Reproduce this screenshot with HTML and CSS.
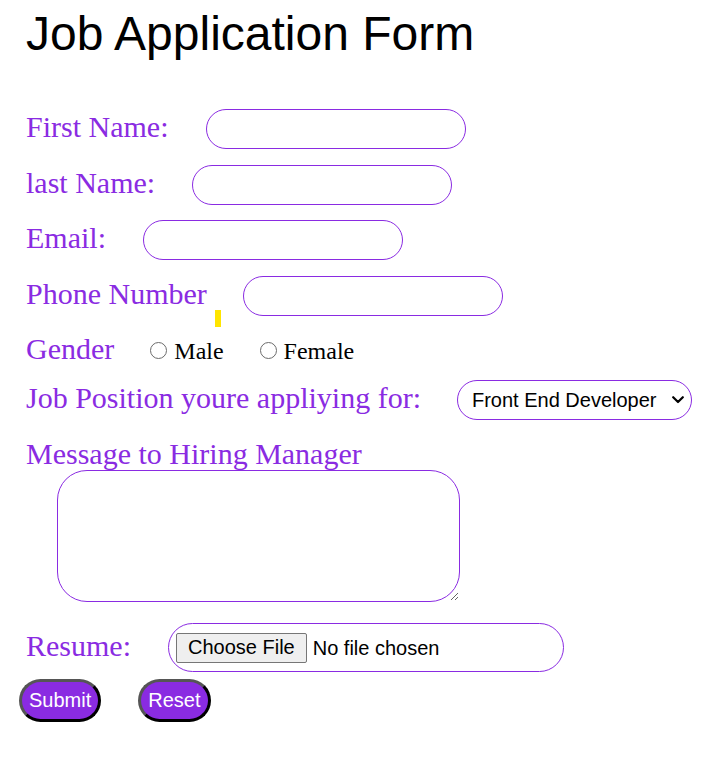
FILE: index.html
```html
<!DOCTYPE html>
<html lang="en">
<head>
<meta charset="utf-8">
<title>Job Application Form</title>
<link rel="stylesheet" href="styles.css">
</head>
<body>
<h1 class="title">Job Application Form</h1>
<form class="form">
  <div class="row">
    <label class="label" for="fn">First Name:</label>
    <input class="text-input" id="fn" type="text">
  </div>
  <div class="row">
    <label class="label" for="ln">last Name:</label>
    <input class="text-input" id="ln" type="text">
  </div>
  <div class="row">
    <label class="label" for="em">Email:</label>
    <input class="text-input" id="em" type="email">
  </div>
  <div class="row row-phone">
    <label class="label" for="ph">Phone Number</label>
    <span class="marker"></span>
    <input class="text-input phone-input" id="ph" type="tel">
  </div>
  <div class="row row-gender">
    <span class="label">Gender</span>
    <label class="choice"><input class="radio" type="radio" name="g">Male</label>
    <label class="choice"><input class="radio" type="radio" name="g">Female</label>
  </div>
  <div class="row row-job">
    <label class="label" for="job">Job Position youre appliying for:</label>
    <span class="select-wrap">
      <select class="select" id="job">
        <option>Front End Developer</option>
        <option>Back End Developer</option>
      </select>
      <svg class="chevron" width="12" height="8" viewBox="0 0 12 8" aria-hidden="true">
        <path d="M1.2 1.2 L6 6 L10.8 1.2" fill="none" stroke="#000" stroke-width="2.2" stroke-linecap="round" stroke-linejoin="round"/>
      </svg>
    </span>
  </div>
  <div class="message">
    <label class="label" for="msg">Message to Hiring Manager</label>
    <textarea class="textarea" id="msg"></textarea>
  </div>
  <div class="row row-resume">
    <label class="label" for="cv">Resume:</label>
    <input class="file-input" id="cv" type="file">
  </div>
  <div class="actions">
    <button class="btn" type="submit">Submit</button>
    <button class="btn" type="reset">Reset</button>
  </div>
</form>
</body>
</html>
```
FILE: styles.css
```css
body {
  margin: 0;
  padding: 6px 0 0 26px;
  background: #fff;
  font-family: "Liberation Serif", "Times New Roman", serif;
}

.title {
  margin: 0;
  font-family: "Liberation Sans", Arial, sans-serif;
  font-weight: normal;
  font-size: 48px;
  line-height: 55px;
  color: #000;
}

.form {
  display: flex;
  flex-direction: column;
  align-items: flex-start;
  margin-top: 48px;
}

.row {
  display: flex;
  align-items: center;
  gap: 37px;
  margin-bottom: 15.5px;
}

.label {
  font-size: 30px;
  line-height: 34px;
  color: #8a2be2;
}

.row .label {
  margin-bottom: 4px;
}

.row-gender .label {
  margin-bottom: 0;
}

.text-input {
  box-sizing: border-box;
  width: 260px;
  height: 40px;
  margin: 0;
  border: 1px solid #8a2be2;
  border-radius: 20px;
  background: #fff;
  outline: none;
}

.row-phone {
  gap: 0;
}

.marker {
  align-self: flex-start;
  width: 6px;
  height: 17px;
  margin: 34px 0 -11px 8px;
  background: #ffe500;
}

.phone-input {
  margin-left: 22px;
}

.row-gender {
  align-items: baseline;
  gap: 36px;
  margin-top: 1px;
  margin-bottom: 14px;
}

.choice {
  display: inline-flex;
  align-items: baseline;
  font-size: 24px;
  color: #000;
}

.radio {
  appearance: none;
  box-sizing: border-box;
  width: 17px;
  height: 17px;
  margin: 0 7px 0 0;
  border: 1.3px solid #6b6b6b;
  border-radius: 50%;
  background: #fff;
  position: relative;
  top: 0;
}

.row-job {
  gap: 36px;
  margin-bottom: 17px;
}

.select-wrap {
  position: relative;
  display: inline-block;
}

.select {
  appearance: none;
  box-sizing: border-box;
  display: block;
  width: 235px;
  height: 40px;
  padding: 0 30px 0 14px;
  border: 1px solid #8a2be2;
  border-radius: 20px;
  background: #fff;
  font-family: "Liberation Sans", Arial, sans-serif;
  font-size: 20px;
  color: #000;
}

.chevron {
  position: absolute;
  top: 16px;
  right: 8px;
  pointer-events: none;
}

.message {
  display: flex;
  flex-direction: column;
  align-items: flex-start;
}

.textarea {
  box-sizing: border-box;
  width: 403px;
  height: 132px;
  margin: -1px 0 0 31px;
  border: 1px solid #8a2be2;
  border-radius: 30px;
  background: #fff;
  outline: none;
}

.row-resume {
  margin-top: 21px;
  margin-bottom: 7px;
}

.file-input {
  box-sizing: border-box;
  width: 396px;
  padding: 8.5px 7px;
  border: 1px solid #8a2be2;
  border-radius: 25px;
  font-family: "Liberation Sans", Arial, sans-serif;
  font-size: 20px;
  color: #000;
}

.file-input::file-selector-button {
  font-family: "Liberation Sans", Arial, sans-serif;
  font-size: 20px;
  line-height: 23px;
  padding: 2.5px 11px;
  margin: 0 6px 0 0;
  border: 1px solid #767676;
  border-radius: 2px;
  background: #efefef;
  color: #000;
}

.actions {
  display: flex;
  gap: 37px;
  margin-left: -7px;
}

.btn {
  box-sizing: border-box;
  height: 43px;
  padding: 0 7px;
  border: 3px solid;
  border-color: #555 #000 #000 #555;
  border-radius: 22px;
  background: #8a2be2;
  color: #fff;
  font-family: "Liberation Sans", Arial, sans-serif;
  font-size: 20px;
  line-height: 23px;
}
```
